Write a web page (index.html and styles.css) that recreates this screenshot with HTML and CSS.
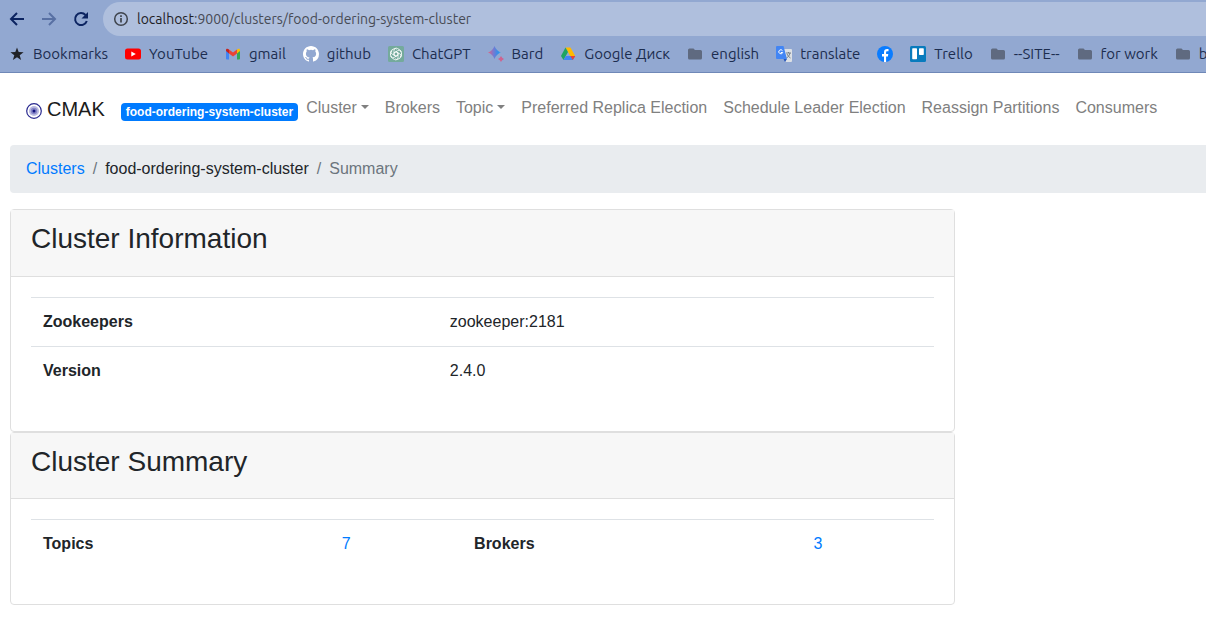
FILE: index.html
```html
<!DOCTYPE html>
<html lang="en">
<head>
<meta charset="utf-8">
<title>CMAK</title>
<link rel="stylesheet" href="styles.css">
</head>
<body>
<svg class="defs" aria-hidden="true">
  <symbol id="folder" viewBox="0 0 16 16"><path fill="#5f6a80" d="M2.500 2.500h4l1.500 1.500h5.500a1.500 1.500 0 0 1 1.500 1.500v6.500a1.500 1.500 0 0 1-1.500 1.500h-11a1.500 1.500 0 0 1-1.500-1.500v-8a1.500 1.500 0 0 1 1.500-1.500z"/></symbol>
</svg>

<header class="browser">
  <div class="toolbar">
    <button class="tool" aria-label="Back"><svg viewBox="0 0 16 16"><path d="M15 8H2.500M8 2L2 8l6 6" fill="none" stroke="#0c2461" stroke-width="2"/></svg></button>
    <button class="tool" aria-label="Forward"><svg viewBox="0 0 16 16"><path d="M1 8h12.500M8 2l6 6-6 6" fill="none" stroke="#5870a3" stroke-width="2"/></svg></button>
    <button class="tool" aria-label="Reload"><svg viewBox="0 0 16 16"><path d="M13.800 10A6 6 0 1 1 12.500 4" fill="none" stroke="#0c2461" stroke-width="2"/><path d="M15 1v6.500H8.500z" fill="#0c2461"/></svg></button>
    <div class="address">
      <svg class="info" viewBox="0 0 16 16"><circle cx="8" cy="8" r="6.300" fill="none" stroke="#3f444d" stroke-width="1.500"/><path d="M8 7v4.500M8 4.300v1.700" stroke="#3f444d" stroke-width="1.700"/></svg>
      <span class="url"><span class="host">localhost</span>:9000/clusters/food-ordering-system-cluster</span>
    </div>
  </div>
  <nav class="bookmarks" aria-label="Bookmarks">
    <a href="#"><svg viewBox="0 0 16 16"><path fill="#202227" d="M8 1.500l1.700 4.600 4.900.1-3.900 3 1.400 4.800L8 11.200 3.900 14l1.400-4.800-3.900-3 4.900-.1z"/></svg>Bookmarks</a>
    <a href="#"><svg viewBox="0 0 16 16"><rect y="2.500" width="16" height="11" rx="2.500" fill="#f00"/><path fill="#fff" d="M6.300 5.500v5L10.800 8z"/></svg>YouTube</a>
    <a href="#"><svg viewBox="0 0 16 16"><path fill="#4285f4" d="M1 4.500l3 2.200v6.800H2a1 1 0 0 1-1-1z"/><path fill="#34a853" d="M15 4.500l-3 2.200v6.800h2a1 1 0 0 0 1-1z"/><path fill="#ea4335" d="M4 3.600l4 3 4-3v3.800l-4 3-4-3z"/><path fill="#c5221f" d="M1 5V4c0-1.500 1.700-1.900 3-.5v3.900z"/><path fill="#fbbc04" d="M15 5V4c0-1.500-1.700-1.900-3-.5v3.900z"/></svg>gmail</a>
    <a href="#"><svg viewBox="0 0 16 16"><path fill="#fff" d="M8 0C3.580 0 0 3.580 0 8c0 3.540 2.290 6.530 5.470 7.590.4.070.55-.17.55-.38 0-.19-.01-.82-.01-1.490-2.010.37-2.530-.49-2.690-.94-.09-.23-.48-.94-.82-1.130-.28-.15-.68-.52-.01-.53.63-.01 1.080.58 1.230.82.72 1.210 1.870.87 2.330.66.07-.52.28-.87.51-1.070-1.780-.2-3.640-.89-3.640-3.950 0-.87.31-1.590.82-2.150-.08-.2-.36-1.020.08-2.120 0 0 .67-.21 2.200.82a7.600 7.600 0 0 1 4 0c1.530-1.040 2.200-.82 2.200-.82.44 1.100.16 1.920.08 2.120.51.56.82 1.270.82 2.150 0 3.070-1.870 3.750-3.650 3.950.29.25.54.73.54 1.480 0 1.070-.01 1.930-.01 2.200 0 .21.15.46.55.38A8 8 0 0 0 16 8c0-4.420-3.580-8-8-8z"/></svg>github</a>
    <a href="#"><svg viewBox="0 0 16 16"><rect width="16" height="16" rx="1.500" fill="#74aa9c"/><g fill="none" stroke="#fff" stroke-width=".8"><path id="petal" d="M6 5.200V4.400a2.300 2.300 0 0 1 3.500-1.900l2 1.200a2.300 2.300 0 0 1 1 2.500M6 5.200v3.900l2 1.100"/><use href="#petal" transform="rotate(60 8 8)"/><use href="#petal" transform="rotate(120 8 8)"/><use href="#petal" transform="rotate(180 8 8)"/><use href="#petal" transform="rotate(240 8 8)"/><use href="#petal" transform="rotate(300 8 8)"/></g></svg>ChatGPT</a>
    <a href="#"><svg viewBox="0 0 16 16"><defs><linearGradient id="bard"><stop offset="0" stop-color="#e5617b"/><stop offset=".4" stop-color="#7b78cf"/><stop offset=".8" stop-color="#2e91ec"/><stop offset="1" stop-color="#5aa5dd"/></linearGradient></defs><path fill="url(#bard)" d="M6.500 0Q8.300 4.700 13 6.500 8.300 8.300 6.500 13 4.700 8.300 0 6.500 4.700 4.700 6.500 0z"/><path fill="#cf638f" d="M13 10q.8 2.200 3 3-2.200.8-3 3-.8-2.200-3-3 2.200-.8 3-3z"/></svg>Bard</a>
    <a href="#"><svg viewBox="0 0 16 16"><path fill="#ffba00" d="M5.500 1.500h5l4.700 8.500h-5z"/><path fill="#1fa463" d="M5.500 1.500L8 6l-4.500 8L1 10z"/><path fill="#4285f4" d="M5.800 10h9.400l-2.400 4H3.500z"/><path fill="#ea4335" d="M10.300 10h4.900l-2.400 4z"/></svg>Google Диск</a>
    <a href="#"><svg><use href="#folder"/></svg>english</a>
    <a href="#"><svg viewBox="0 0 16 16"><path fill="#dce0e5" d="M7 3h8a1 1 0 0 1 1 1v11a1 1 0 0 1-1 1H9.500z"/><path fill="#4285f4" d="M1 0h6.500L11 13H1a1 1 0 0 1-1-1V1a1 1 0 0 1 1-1z"/><path fill="#2857ba" d="M7.500 13H11l-2 3z"/><path d="M6.500 4.700A2 2 0 1 0 6.700 6.500H4.800" stroke="#fff" fill="none"/><path d="M10 7h5M12.500 6v1M14 7q-.5 3-3.300 5M11 8q1 2.500 3.500 4" stroke="#6c7781" stroke-width=".9" fill="none"/></svg>translate</a>
    <a href="#" aria-label="Facebook"><svg viewBox="0 0 16 16"><circle cx="8" cy="8" r="8" fill="#0a7cff"/><path fill="#fff" d="M7 16v-5.500H5V8h2V6.300C7 4.100 8.200 3 10.200 3l1.300.1v2.100h-1.100c-1 0-1.300.5-1.300 1.200V8h2.200l-.4 2.500H9.100V16z"/></svg></a>
    <a href="#"><svg viewBox="0 0 16 16"><rect width="16" height="16" rx="1.500" fill="#087bbd"/><rect x="2.200" y="2.200" width="4.800" height="11" rx=".7" fill="#fff"/><rect x="9" y="2.200" width="4.800" height="6.800" rx=".7" fill="#fff"/></svg>Trello</a>
    <a href="#"><svg><use href="#folder"/></svg>--SITE--</a>
    <a href="#"><svg><use href="#folder"/></svg>for work</a>
    <a href="#"><svg><use href="#folder"/></svg>b</a>
  </nav>
</header>

<main class="page">
  <nav class="navbar">
    <a class="brand" href="#"><svg viewBox="0 0 16 16"><circle cx="8" cy="8" r="7.300" fill="#fff" stroke="#29298f" stroke-width="1.200"/><circle cx="8" cy="8" r="5" fill="#b9b9e0"/><circle cx="8" cy="8" r="3.200" fill="#8585c8"/><circle cx="8" cy="8" r="1.500" fill="#10107c"/></svg>CMAK</a>
    <span class="badge">food-ordering-system-cluster</span>
    <a class="link drop" href="#">Cluster</a>
    <a class="link" href="#">Brokers</a>
    <a class="link drop" href="#">Topic</a>
    <a class="link" href="#">Preferred Replica Election</a>
    <a class="link" href="#">Schedule Leader Election</a>
    <a class="link" href="#">Reassign Partitions</a>
    <a class="link" href="#">Consumers</a>
  </nav>

  <nav class="breadcrumb" aria-label="Breadcrumb">
    <a href="#">Clusters</a><span class="slash">/</span><span>food-ordering-system-cluster</span><span class="slash">/</span><span class="current">Summary</span>
  </nav>

  <div class="cards">
    <section class="card">
      <div class="card-head"><h3>Cluster Information</h3></div>
      <div class="card-body">
        <table>
          <tr><th scope="row">Zookeepers</th><td>zookeeper:2181</td></tr>
          <tr><th scope="row">Version</th><td>2.4.0</td></tr>
        </table>
      </div>
    </section>
    <section class="card">
      <div class="card-head"><h3>Cluster Summary</h3></div>
      <div class="card-body">
        <table>
          <tr><th scope="row">Topics</th><td><a href="#">7</a></td><th scope="row">Brokers</th><td><a href="#">3</a></td></tr>
        </table>
      </div>
    </section>
  </div>
</main>
</body>
</html>
```
FILE: styles.css
```css
* { box-sizing: border-box; }
body {
  margin: 0;
  background: #fff;
  color: #212529;
  font: 16px/24px "Liberation Sans", Arial, sans-serif;
  overflow-x: hidden;
}
a { color: #007bff; text-decoration: none; }
.defs { display: none; }

.browser {
  background: #92a8d1;
  border-bottom: 1px solid #6f88b7;
  overflow: hidden;
  font-family: Ubuntu, "Noto Sans", sans-serif;
}
.toolbar {
  display: flex;
  align-items: center;
  gap: 16px;
  padding: 2px 0 0 9px;
}
.tool {
  width: 16px;
  height: 16px;
  padding: 0;
  border: 0;
  background: none;
}
.tool svg, .info, .bookmarks svg {
  display: block;
  flex: none;
  width: 16px;
  height: 16px;
}
.address {
  flex: 1;
  display: flex;
  align-items: center;
  gap: 8px;
  height: 34px;
  margin-left: -2px;
  padding-left: 10px;
  border-radius: 17px 0 0 17px;
  background: #afbfdd;
}
.url { font-size: 14px; color: #474b55; white-space: nowrap; }
.host { color: #1f2126; }
.bookmarks {
  display: flex;
  align-items: center;
  gap: 17px;
  height: 36px;
  padding-left: 9px;
}
.bookmarks a {
  flex: none;
  display: flex;
  align-items: center;
  gap: 8px;
  color: #1c2d4f;
  font-size: 15px;
  white-space: nowrap;
}

.page { padding-left: 10px; }
.navbar {
  display: flex;
  align-items: center;
  gap: 16px;
  padding: 20px 16px;
  white-space: nowrap;
}
.brand {
  display: flex;
  align-items: center;
  gap: 5px;
  color: #1b1b1b;
  font-size: 20px;
  line-height: 32px;
}
.brand svg { width: 16px; height: 16px; margin-top: 4px; }
.badge {
  margin: 6px -8px 0 0;
  padding: 3px 5px;
  border-radius: 4px;
  background: #007bff;
  color: #fff;
  font-size: 12px;
  font-weight: 700;
  line-height: 12px;
}
.link { padding-bottom: 2px; color: #808080; }
.drop::after {
  content: "";
  display: inline-block;
  margin-left: 4px;
  vertical-align: 4px;
  border: 4px solid transparent;
  border-top-color: currentColor;
  border-bottom: 0;
}

.breadcrumb {
  display: flex;
  gap: 8px;
  margin-bottom: 16px;
  padding: 12px 16px;
  border-radius: 4px 0 0 4px;
  background: #e9ecef;
}
.slash, .current { color: #6c757d; }

.cards { width: 79%; }
.card {
  border: 1px solid #dfdfdf;
  border-radius: 4px;
}
.card-head {
  padding: 12px 20px 20px;
  border-bottom: 1px solid #dfdfdf;
  background: #f7f7f7;
}
h3 { margin: 0; font-size: 28px; font-weight: 400; line-height: 1.2; }
.card-body { padding: 20px 20px 36px; }
table { width: 100%; border-collapse: collapse; }
th, td {
  padding: 12px;
  border-top: 1px solid #dee2e6;
  text-align: left;
}
```
